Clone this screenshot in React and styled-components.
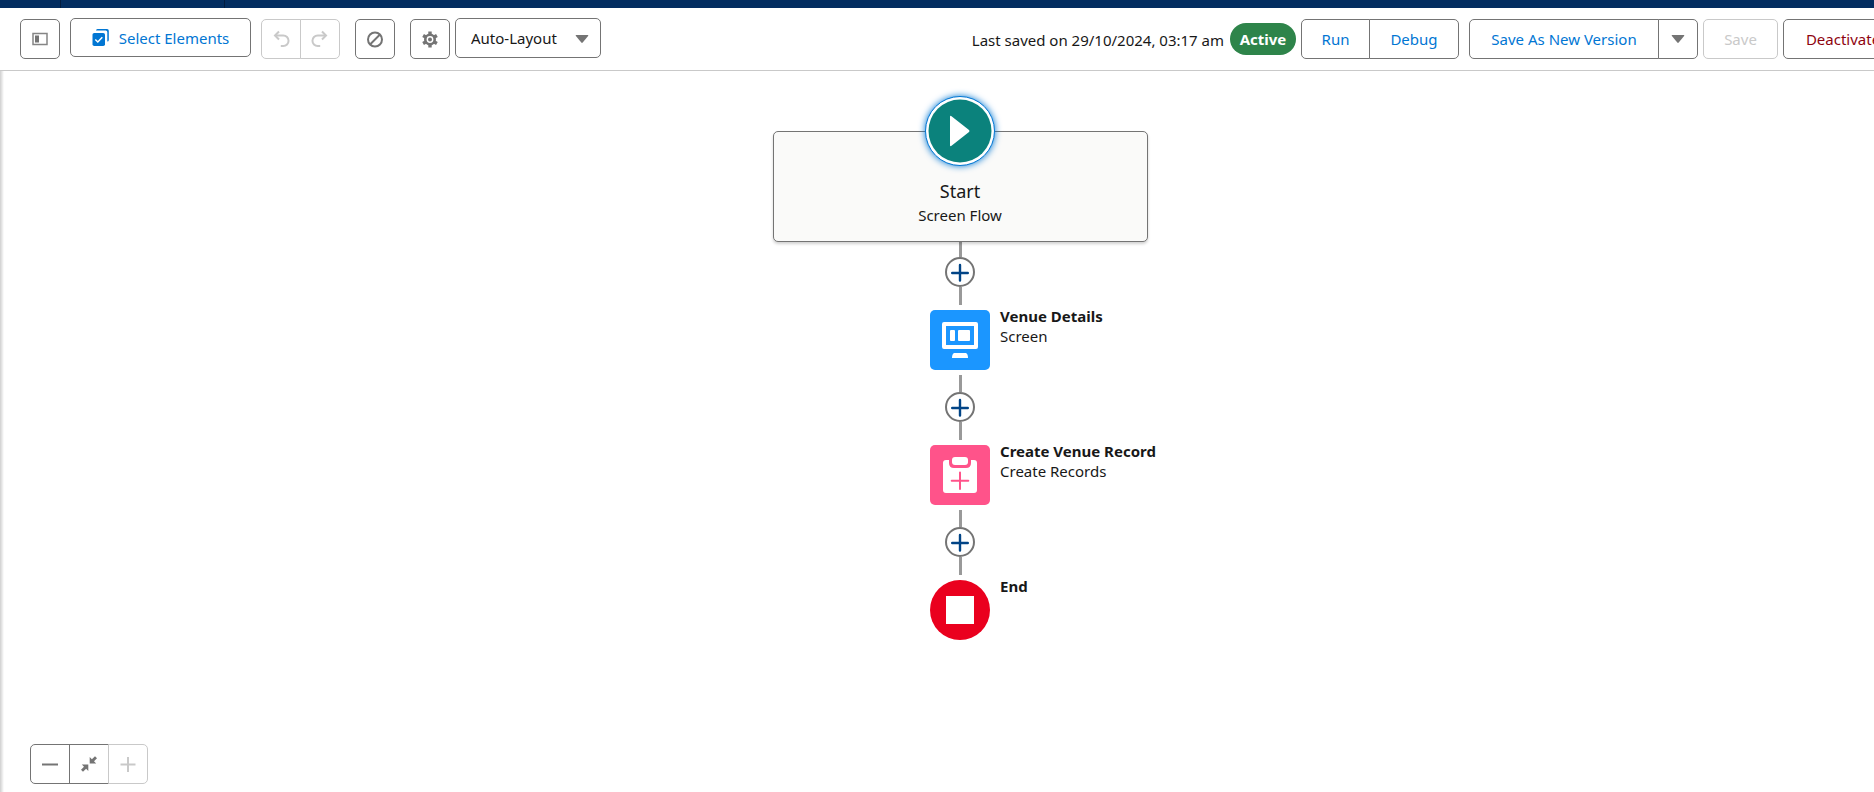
import React from "react";
import styled, { createGlobalStyle } from "styled-components";

const color = {
  navy: "#032d60",
  line: "#c9c9c9",
  gray: "#747474",
  link: "#0176d3",
  text: "#181818",
  danger: "#8e030f",
  active: "#2e844a",
};

const Global = createGlobalStyle`
  * { box-sizing: border-box; }
  html, body, #root { height: 100%; }
  body {
    margin: 0;
    overflow: hidden;
    background: #fff;
    color: ${color.text};
    font-family: "Segoe UI", "Noto Sans", "Open Sans", sans-serif;
    font-size: 15px;
    line-height: 20px;
  }
`;

const Page = styled.div`
  display: flex;
  flex-direction: column;
  height: 100%;
`;

const TabStrip = styled.div`
  flex: none;
  display: flex;
  height: 8px;
  background: ${color.navy};
`;

const TabEdge = styled.span`
  width: ${(p) => p.$width}px;
  border-right: 1px solid #021c3f;
`;

const Toolbar = styled.header`
  flex: none;
  display: flex;
  justify-content: space-between;
  height: 63px;
  padding: 10px 0 0 20px;
  border-bottom: 1px solid ${color.line};
  overflow: hidden;
`;

const Tools = styled.div`
  display: flex;
  align-items: flex-start;
`;

const Actions = styled(Tools)`
  flex: none;
  margin-right: -29px;
`;

const Button = styled.button`
  flex: none;
  display: inline-flex;
  align-items: center;
  justify-content: center;
  gap: 10px;
  width: ${(p) => p.$width || 40}px;
  height: ${(p) => (p.$raised ? 39 : 40)}px;
  padding: 0;
  margin-top: ${(p) => (p.$raised ? 0 : 1)}px;
  margin-left: ${(p) => p.$gap || 0}px;
  border: 1px solid ${color.gray};
  border-radius: 5px;
  background: #fff;
  color: ${(p) => p.$color || color.link};
  font: inherit;
  white-space: nowrap;

  &:disabled {
    border-color: ${color.line};
    color: ${color.line};
  }
`;

const Group = styled.div`
  display: flex;
  margin-left: ${(p) => p.$gap || 0}px;

  ${Button} + ${Button} { margin-left: -1px; }
  ${Button}:not(:last-child) { border-top-right-radius: 0; border-bottom-right-radius: 0; }
  ${Button}:not(:first-child) { border-top-left-radius: 0; border-bottom-left-radius: 0; }
`;

const SelectBox = styled.div`
  display: grid;
  align-items: center;
  width: 146px;
  height: 40px;
  margin-left: 5px;
  border: 1px solid ${color.gray};
  border-radius: 5px;

  > * { grid-area: 1 / 1; }
  > svg { justify-self: end; margin: 2px 11px 0 0; pointer-events: none; }
`;

const Select = styled.select`
  appearance: none;
  width: 100%;
  height: 100%;
  padding: 0 32px 0 15px;
  border: 0;
  background: transparent;
  color: ${color.text};
  font: inherit;
`;

const Saved = styled.p`
  margin: 12px 6px 0 0;
  white-space: nowrap;
`;

const Badge = styled.span`
  width: 66px;
  height: 32px;
  margin: 5px 5px 0 0;
  border-radius: 16px;
  background: ${color.active};
  color: #fff;
  font-weight: 700;
  line-height: 32px;
  text-align: center;
`;

const Canvas = styled.main`
  flex: 1;
  display: flex;
  flex-direction: column;
  justify-content: space-between;
  min-height: 0;
  padding-bottom: 8px;
  background: linear-gradient(to right, #cfcfcf, #fff 4px);
`;

const Flow = styled.div`
  display: flex;
  flex-direction: column;
  align-items: center;
  padding: 60px 0 0 46px;
`;

const StartCard = styled.section`
  position: relative;
  width: 375px;
  height: 111px;
  padding-top: 47px;
  border: 1px solid ${color.gray};
  border-radius: 5px;
  background: #fafaf9;
  box-shadow: 0 2px 3px rgba(0, 0, 0, 0.18);
  text-align: center;
`;

const StartTitle = styled.h2`
  margin: 0 0 2px;
  font-size: 18px;
  font-weight: 400;
  line-height: 24px;
`;

const Line = styled.p`
  margin: 0;
`;

const StartBadge = styled.button`
  position: absolute;
  top: -36px;
  left: 50%;
  width: 70px;
  height: 70px;
  margin-left: -35px;
  padding: 2px;
  border: 1px solid ${color.link};
  border-radius: 50%;
  background: #fff;
  box-shadow: 0 0 7px ${color.link};

  svg { display: block; }
`;

const Wire = styled.span`
  width: 3px;
  height: ${(p) => p.$height}px;
  background: #999;
`;

const AddButton = styled.button`
  display: grid;
  place-items: center;
  width: 30px;
  height: 30px;
  padding: 0;
  border: 2px solid ${color.gray};
  border-radius: 50%;
  background: #fff;
`;

const Step = styled.section`
  display: grid;
  grid-template-columns: 1fr 60px 1fr;
  column-gap: 10px;
  align-self: stretch;
  margin: 5px 0;
`;

const Tile = styled.div`
  grid-column: 2;
  height: 60px;
  border-radius: ${(p) => (p.$round ? "50%" : "5px")};
  background: ${(p) => p.$fill};

  svg { display: block; }
`;

const StepTitle = styled.h3`
  margin: -4px 0 0;
  font-size: 15px;
  font-weight: 700;
  line-height: 20px;
`;

const Zoom = styled(Group)`
  margin-left: 30px;
`;

const Caret = () => (
  <svg width="14" height="10" viewBox="0 0 14 10" aria-hidden="true">
    <path d="M1.2 1h11.6q1 0 .3.9L7.7 8.6q-.7.8-1.400 0L.9 1.900Q.2 1 1.200 1z" fill={color.gray} />
  </svg>
);

const Stroke = ({ size = 20, children, width = 2 }) => (
  <svg width={size} height={size} viewBox={`0 0 ${size} ${size}`} fill="none" stroke="currentColor" strokeWidth={width} aria-hidden="true">
    {children}
  </svg>
);

const PanelIcon = () => (
  <svg width="16" height="14" viewBox="0 0 16 14" aria-hidden="true">
    <rect x="1" y="1.500" width="14" height="11" fill="#fff" stroke="#858585" strokeWidth="1.500" />
    <rect x="3" y="3.500" width="4" height="7" fill={color.gray} />
  </svg>
);

const SelectIcon = () => (
  <svg width="17" height="17" viewBox="0 0 17 17" aria-hidden="true">
    <path d="M5.500 0H15q1.800 0 1.800 1.800V11q0 1.500-1.500 1.500V3q0-1.500-1.500-1.500H4q0-1.500 1.500-1.500z" fill={color.link} />
    <rect x="0.500" y="4" width="12.500" height="13" rx="1.800" fill={color.link} />
    <path d="M3.300 10.500l2.500 2.500 4.500-4.800" fill="none" stroke="#fff" strokeWidth="1.500" />
  </svg>
);

const UndoIcon = () => (
  <Stroke>
    <path d="M8 2.500L4 6.500l4 4" />
    <path d="M4 6.500h8.300a5.200 5.200 0 0 1 0 10.500h-2.500" />
  </Stroke>
);

const RedoIcon = () => (
  <Stroke>
    <path d="M12 2.500l4 4-4 4" />
    <path d="M16 6.500H7.700a5.200 5.200 0 0 0 0 10.500h2.500" />
  </Stroke>
);

const BlockIcon = () => (
  <Stroke size={18}>
    <circle cx="9" cy="9.500" r="7" />
    <path d="M4 14.500L14 4.500" />
  </Stroke>
);

const GearIcon = () => (
  <svg width="18" height="18" viewBox="0 0 18 18" fill="none" stroke={color.gray} aria-hidden="true">
    <circle cx="9" cy="9.500" r="4.700" strokeWidth="2.600" />
    <path d="M9 1.500v3M9 14.500v3M2.100 5.500l2.600 1.500M13.300 12l2.600 1.500M2.100 13.500l2.600-1.500M13.300 7L15.900 5.500" strokeWidth="3.400" />
    <circle cx="9" cy="9.500" r="2" fill={color.gray} stroke="none" />
  </svg>
);

const PlusIcon = () => (
  <Stroke size={18}>
    <path d="M9 2v15M1.500 9.500h15" />
  </Stroke>
);

const FitIcon = () => (
  <svg width="18" height="18" viewBox="0 0 18 18" fill={color.gray} aria-hidden="true">
    <path d="M9.700 8.500V2l2.200 2.200L15 1.200l2 2-3 3 2.200 2.300z" />
    <path d="M8.300 9.500V16l-2.200-2.200L3 16.800l-2-2 3-3-2.200-2.300z" />
  </svg>
);

const PlayIcon = () => (
  <svg width="64" height="64" viewBox="0 0 64 64" aria-hidden="true">
    <circle cx="32" cy="32" r="31.500" fill="#0b827c" />
    <path d="M22 18q0-1.800 1.500-.8L41 31q1 1 0 2L23.500 46.800Q22 48 22 46z" fill="#fff" />
  </svg>
);

const ScreenIcon = () => (
  <svg width="60" height="60" viewBox="0 0 60 60" fill="#fff" aria-hidden="true">
    <path fillRule="evenodd" d="M14 12h32q2 0 2 2v23q0 2-2 2H14q-2 0-2-2V14q0-2 2-2zM16 16v19h28V16z" />
    <rect x="20" y="20" width="5" height="11" rx="1" />
    <rect x="28" y="20" width="12" height="11" rx="1" />
    <path d="M24 43h12q2 1 2 5H22q0-4 2-5z" />
  </svg>
);

const CreateIcon = () => (
  <svg width="60" height="60" viewBox="0 0 60 60" fill="#fff" aria-hidden="true">
    <path d="M16 15h3v3q0 5 5 5h12q5 0 5-5v-3h3q3 0 3 3v27q0 3-3 3H16q-3 0-3-3V18q0-3 3-3z" />
    <rect x="22" y="12" width="16" height="8" rx="3" />
    <path d="M30 27.500v16.500M21.700 35.700h16.600" stroke="#ff538a" strokeWidth="2" strokeLinecap="round" />
  </svg>
);

const StopIcon = () => (
  <svg width="60" height="60" viewBox="0 0 60 60" aria-hidden="true">
    <rect x="16" y="16" width="28" height="28" fill="#fff" />
  </svg>
);

const Connector = ({ top = 17 }) => (
  <>
    <Wire $height={top} />
    <AddButton aria-label="Add element">
      <svg width="20" height="20" viewBox="0 0 20 20" stroke="#014486" strokeWidth="2.400" strokeLinecap="round" aria-hidden="true">
        <path d="M10 3v15.500M2.200 11h15.600" />
      </svg>
    </AddButton>
    <Wire $height={18} />
  </>
);

const steps = [
  { title: "Venue Details", kind: "Screen", fill: "#1b96ff", Icon: ScreenIcon },
  { title: "Create Venue Record", kind: "Create Records", fill: "#ff538a", Icon: CreateIcon },
  { title: "End", fill: "#ea001e", round: true, Icon: StopIcon },
];

export default function App() {
  return (
    <Page>
      <Global />
      <TabStrip>
        <TabEdge $width={61} />
        <TabEdge $width={164} />
      </TabStrip>
      <Toolbar>
        <Tools>
          <Button $color={color.gray} aria-label="Toggle toolbox"><PanelIcon /></Button>
          <Button $width={181} $gap={10} $raised><SelectIcon />Select Elements</Button>
          <Group $gap={10}>
            <Button disabled aria-label="Undo"><UndoIcon /></Button>
            <Button disabled aria-label="Redo"><RedoIcon /></Button>
          </Group>
          <Button $gap={15} $color={color.gray} aria-label="Show errors"><BlockIcon /></Button>
          <Button $gap={15} $color={color.gray} aria-label="Flow settings"><GearIcon /></Button>
          <SelectBox>
            <Select aria-label="Layout mode" defaultValue="auto">
              <option value="auto">Auto-Layout</option>
              <option value="free">Free-Form</option>
            </Select>
            <Caret />
          </SelectBox>
        </Tools>
        <Actions>
          <Saved>Last saved on 29/10/2024, 03:17 am</Saved>
          <Badge>Active</Badge>
          <Group>
            <Button $width={69}>Run</Button>
            <Button $width={90}>Debug</Button>
          </Group>
          <Group $gap={10}>
            <Button $width={190}>Save As New Version</Button>
            <Button aria-label="More save options"><Caret /></Button>
          </Group>
          <Button $width={75} $gap={5} disabled>Save</Button>
          <Button $width={120} $gap={5} $color={color.danger}>Deactivate</Button>
        </Actions>
      </Toolbar>
      <Canvas>
        <Flow>
          <StartCard>
            <StartBadge aria-label="Start element"><PlayIcon /></StartBadge>
            <StartTitle>Start</StartTitle>
            <Line>Screen Flow</Line>
          </StartCard>
          {steps.map(({ title, kind, fill, round, Icon }, i) => (
            <React.Fragment key={title}>
              <Connector top={i === 0 ? 15 : 17} />
              <Step>
                <Tile $fill={fill} $round={round}><Icon /></Tile>
                <div>
                  <StepTitle>{title}</StepTitle>
                  {kind && <Line>{kind}</Line>}
                </div>
              </Step>
            </React.Fragment>
          ))}
        </Flow>
        <Zoom>
          <Button $color={color.gray} aria-label="Zoom out">
            <Stroke size={18}><path d="M1 9.500h16" /></Stroke>
          </Button>
          <Button $color={color.gray} aria-label="Zoom to fit"><FitIcon /></Button>
          <Button disabled aria-label="Zoom in"><PlusIcon /></Button>
        </Zoom>
      </Canvas>
    </Page>
  );
}
